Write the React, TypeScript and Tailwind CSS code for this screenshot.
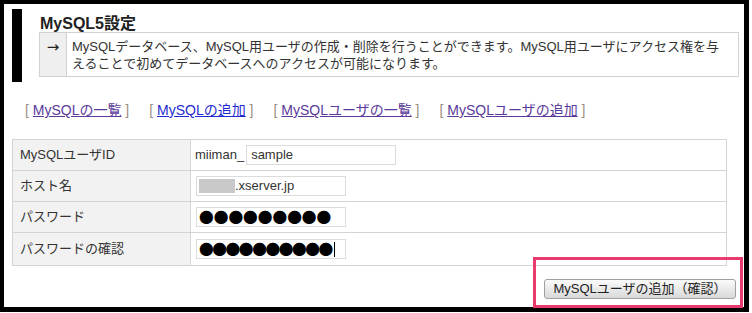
import type { ReactNode } from 'react';

// ── Shared ──

const JP = "font-['Liberation_Sans','Noto_Sans_CJK_JP',sans-serif]";

const LINKS = [
  { label: 'MySQLの一覧', color: 'text-[#5a3a9a]' },
  { label: 'MySQLの追加', color: 'text-[#1f2bd0]' },
  { label: 'MySQLユーザの一覧', color: 'text-[#5a3a9a]' },
  { label: 'MySQLユーザの追加', color: 'text-[#5a3a9a]' },
];

// ── Pieces ──

function Field({ children, className = '' }: { children: ReactNode; className?: string }) {
  return (
    <div
      className={`flex h-[20px] w-[150px] items-center border border-[#dcdcdc] bg-white px-[2px] ${className}`}
    >
      {children}
    </div>
  );
}

function Row({ label, children, last }: { label: string; children: ReactNode; last?: boolean }) {
  return (
    <div className={`flex ${last ? 'h-[32px]' : 'h-[31px] border-b border-[#d4d4d4]'}`}>
      <div className="flex w-[178px] shrink-0 items-center border-r border-[#d4d4d4] bg-[#f2f2f2] pl-[7px] text-[13px] text-[#333]">
        {label}
      </div>
      <div className="flex flex-1 items-center pl-[4px] text-[13px] text-[#333]">{children}</div>
    </div>
  );
}

// ── Page ──

export default function App() {
  return (
    <div className={`h-[313px] w-[752px] bg-white ${JP}`}>
      <div className="flex h-[312px] w-[749px] flex-col border-t-4 border-r-[5px] border-b-[5px] border-l-4 border-black">
        {/* Header */}
        <div className="ml-[8px] mt-[5px] flex">
          <div className="w-[10px] shrink-0 bg-black" />
          <div className="ml-[17px] pb-[5px]">
            <h1 className="h-[23px] pl-[1px] pt-[7px] text-[16px] font-bold leading-[16px] text-[#222]">
              MySQL5設定
            </h1>
            <div className="flex h-[45px] w-[700px] border border-[#d2d2d2]">
              <div className="flex w-[27px] shrink-0 items-start justify-center border-r border-[#d2d2d2] bg-[#efefef] pt-[5px] font-['DejaVu_Sans',sans-serif] text-[15px] leading-[18px] text-[#222]">
                →
              </div>
              <p className="pl-[5px] pt-[5px] text-[13px] leading-[17px] text-[#333]">
                <span className="block whitespace-nowrap">
                  MySQLデータベース、MySQL用ユーザの作成・削除を行うことができます。MySQL用ユーザにアクセス権を与
                </span>
                <span className="block whitespace-nowrap">
                  えることで初めてデータベースへのアクセスが可能になります。
                </span>
              </p>
            </div>
          </div>
        </div>

        {/* Links */}
        <div className="mt-[19px] flex gap-[20px] pl-[21px] text-[14px] leading-[18px]">
          {LINKS.map((l) => (
            <span key={l.label} className="whitespace-pre text-[#9a8f80]">
              {'[ '}
              <a href="#" className={`underline ${l.color}`}>
                {l.label}
              </a>
              {' ]'}
            </span>
          ))}
        </div>

        {/* Form table */}
        <div className="ml-[8px] mt-[20px] w-[715px] border border-[#d4d4d4]">
          <Row label="MySQLユーザID">
            <span className="mr-[2px]">miiman_</span>
            <Field className="pl-[4px]">sample</Field>
          </Row>
          <Row label="ホスト名">
            <Field className="ml-[1px]">
              <span className="h-[14px] w-[36px] bg-[#c8c8c8]" />
              <span>.xserver.jp</span>
            </Field>
          </Row>
          <Row label="パスワード">
            <Field className="ml-[1px]">
              <span className="font-['Noto_Sans_CJK_JP',sans-serif] text-[14.7px] leading-none text-black">
                ●●●●●●●●●
              </span>
            </Field>
          </Row>
          <Row label="パスワードの確認" last>
            <Field className="ml-[1px]">
              <span className="font-['Noto_Sans_CJK_JP',sans-serif] text-[14.7px] leading-none tracking-[-1.4px] text-black">
                ●●●●●●●●●●
              </span>
              <span className="ml-[2px] h-[15px] w-px bg-black" />
            </Field>
          </Row>
        </div>

        {/* Submit */}
        <div className="mt-[10px] flex justify-end pr-[8px]">
          <div className="relative">
            <button className="h-[20px] w-[192px] rounded-[3px] border border-[#a0a0a0] bg-gradient-to-b from-[#fbfbfb] to-[#d9d9d9] text-[13px] leading-[18px] text-[#222]">
              MySQLユーザの追加（確認）
            </button>
            <div className="pointer-events-none absolute -top-[19px] -right-[7px] -bottom-[8px] -left-[11px] border-[3px] border-[#ec3a6c]" />
          </div>
        </div>
      </div>
    </div>
  );
}
